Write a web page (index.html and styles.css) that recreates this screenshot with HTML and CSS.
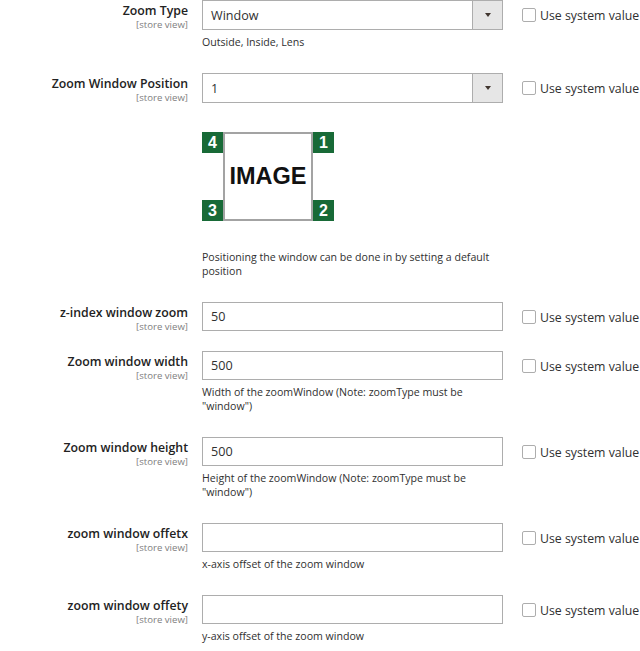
FILE: index.html
```html
<!DOCTYPE html>
<html>
<head>
<meta charset="utf-8">
<link rel="stylesheet" href="styles.css">
</head>
<body>
<div class="form">
  <div class="field">
    <div class="label"><span class="title">Zoom Type</span><span class="scope">[store view]</span></div>
    <div class="control">
      <div class="select"><span class="value">Window</span><span class="btn"><span class="arrow"></span></span></div>
      <div class="note">Outside, Inside, Lens</div>
    </div>
    <div class="use-default"><span class="cb"></span>Use system value</div>
  </div>

  <div class="field">
    <div class="label"><span class="title">Zoom Window Position</span><span class="scope">[store view]</span></div>
    <div class="control">
      <div class="select"><span class="value">1</span><span class="btn"><span class="arrow"></span></span></div>
      <div class="diagram">
        <span class="corner c4">4</span>
        <div class="img-box">IMAGE</div>
        <span class="corner c1">1</span>
        <span class="corner c3">3</span>
        <span class="corner c2">2</span>
      </div>
      <div class="note note-far">Positioning the window can be done in by setting a default position</div>
    </div>
    <div class="use-default"><span class="cb"></span>Use system value</div>
  </div>

  <div class="field">
    <div class="label"><span class="title">z-index window zoom</span><span class="scope">[store view]</span></div>
    <div class="control">
      <div class="input">50</div>
    </div>
    <div class="use-default"><span class="cb"></span>Use system value</div>
  </div>

  <div class="field">
    <div class="label"><span class="title">Zoom window width</span><span class="scope">[store view]</span></div>
    <div class="control">
      <div class="input">500</div>
      <div class="note">Width of the zoomWindow (Note: zoomType must be "window")</div>
    </div>
    <div class="use-default"><span class="cb"></span>Use system value</div>
  </div>

  <div class="field">
    <div class="label"><span class="title">Zoom window height</span><span class="scope">[store view]</span></div>
    <div class="control">
      <div class="input">500</div>
      <div class="note">Height of the zoomWindow (Note: zoomType must be "window")</div>
    </div>
    <div class="use-default"><span class="cb"></span>Use system value</div>
  </div>

  <div class="field">
    <div class="label"><span class="title">zoom window offetx</span><span class="scope">[store view]</span></div>
    <div class="control">
      <div class="input"></div>
      <div class="note">x-axis offset of the zoom window</div>
    </div>
    <div class="use-default"><span class="cb"></span>Use system value</div>
  </div>

  <div class="field">
    <div class="label"><span class="title">zoom window offety</span><span class="scope">[store view]</span></div>
    <div class="control">
      <div class="input"></div>
      <div class="note">y-axis offset of the zoom window</div>
    </div>
    <div class="use-default"><span class="cb"></span>Use system value</div>
  </div>
</div>
</body>
</html>
```

FILE: styles.css
```css
html, body {
  margin: 0;
  padding: 0;
  background: #ffffff;
  overflow: hidden;
}
body {
  font-family: "Open Sans", "Liberation Sans", sans-serif;
  color: #303030;
}
.form {
  display: flex;
  flex-direction: column;
  gap: 19px;
}
.field {
  display: flex;
  align-items: flex-start;
}
.label {
  width: 188px;
  flex: none;
  display: flex;
  flex-direction: column;
  align-items: flex-end;
  text-align: right;
  padding-top: 3px;
}
.title {
  font-size: 12.3px;
  font-weight: 600;
  line-height: 15px;
  color: #222222;
  white-space: nowrap;
}
.scope {
  margin-top: 1px;
  font-size: 9.6px;
  line-height: 11px;
  color: #808080;
  white-space: nowrap;
}
.control {
  width: 301px;
  flex: none;
  margin-left: 14px;
}
.select {
  box-sizing: border-box;
  height: 30px;
  border: 1px solid #adadad;
  display: flex;
  align-items: stretch;
  background: #fff;
}
.select .value {
  flex: 1;
  padding-left: 8px;
  font-size: 12.6px;
  line-height: 29px;
  color: #303030;
}
.select .btn {
  width: 29px;
  background: #e6e6e6;
  border-left: 1px solid #adadad;
  display: flex;
  align-items: center;
  justify-content: center;
}
.arrow {
  width: 0;
  height: 0;
  border-left: 3.5px solid transparent;
  border-right: 3.5px solid transparent;
  border-top: 4px solid #41362f;
}
.input {
  box-sizing: border-box;
  height: 29px;
  border: 1px solid #adadad;
  padding-left: 8px;
  font-size: 12.6px;
  line-height: 28px;
  color: #303030;
  background: #fff;
}
.note {
  margin-top: 5px;
  margin-bottom: 5px;
  font-size: 10.6px;
  line-height: 14px;
  color: #303030;
  padding-right: 8px;
}
.note-far {
  margin-top: 29px;
}
.diagram {
  margin-top: 29px;
  width: 132px;
  height: 89px;
  display: grid;
  grid-template-columns: 21px 90px 21px;
  grid-template-rows: 21px 1fr 21px;
}
.img-box {
  grid-column: 2;
  grid-row: 1 / 4;
  box-sizing: border-box;
  border: 2px solid #a3a3a3;
  display: flex;
  align-items: center;
  justify-content: center;
  font-family: "Liberation Sans", Arial, sans-serif;
  font-weight: 700;
  font-size: 23.5px;
  color: #111;
}
.corner {
  background: #186a37;
  color: #fff;
  font-family: "Liberation Sans", Arial, sans-serif;
  font-weight: 700;
  font-size: 16px;
  line-height: 21px;
  text-align: center;
}
.c4 { grid-column: 1; grid-row: 1; }
.c1 { grid-column: 3; grid-row: 1; }
.c3 { grid-column: 1; grid-row: 3; }
.c2 { grid-column: 3; grid-row: 3; }
.use-default {
  margin-left: 19px;
  height: 30px;
  display: flex;
  align-items: center;
  gap: 4px;
  font-size: 12.3px;
  color: #303030;
  white-space: nowrap;
}
.cb {
  box-sizing: border-box;
  width: 14px;
  height: 14px;
  border: 1px solid #adadad;
  border-radius: 2px;
  background: #fff;
  flex: none;
}
```
